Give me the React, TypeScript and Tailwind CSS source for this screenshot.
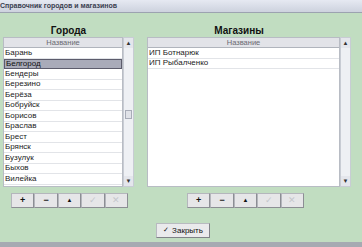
import React from "react";

const cities = [
  "Барань",
  "Белгород",
  "Бендеры",
  "Березино",
  "Берёза",
  "Бобруйск",
  "Борисов",
  "Браслав",
  "Брест",
  "Брянск",
  "Бузулук",
  "Быхов",
  "Вилейка",
];

const shops = ["ИП Ботнарюк", "ИП Рыбалченко"];

function ScrollBar({ thumb }: { thumb?: boolean }) {
  return (
    <div className="w-[11px] flex flex-col bg-[#eef0f4] border border-[#c8ccd4]">
      <div className="h-[10px] flex items-center justify-center bg-[#e4e6ec] text-[6px] text-[#333]">▲</div>
      <div className="flex-1 relative">
        {thumb && (
          <div className="absolute left-[1px] right-[1px] top-[62px] h-[9px] bg-[#e0e2e8] border border-[#a8acb8]" />
        )}
      </div>
      <div className="h-[10px] flex items-center justify-center bg-[#e4e6ec] text-[6px] text-[#333]">▼</div>
    </div>
  );
}

function Grid({ rows, selected, thumb }: { rows: string[]; selected?: number; thumb?: boolean }) {
  return (
    <div className="flex h-[150px]">
      <div className="flex-1 flex flex-col bg-white border border-[#b8bcc4]">
        <div className="h-[10px] flex items-center justify-center bg-[#e2e3e8] border-b border-[#b0b4bc] text-[#6a6a72] text-[7.5px]">
          Название
        </div>
        {rows.map((r, i) => (
          <div
            key={r}
            className={
              i === selected
                ? "h-[10.5px] flex items-center pl-[1px] bg-[#a9abb9] border border-[#5c5c6c] text-[#111] text-[8px]"
                : "h-[10.5px] flex items-center pl-[1px] border-b border-[#e2e4e8] text-[#222] text-[8px]"
            }
          >
            {r}
          </div>
        ))}
      </div>
      <ScrollBar thumb={thumb} />
    </div>
  );
}

function Buttons() {
  const items = [
    { t: "+", on: true },
    { t: "−", on: true },
    { t: "▲", on: true },
    { t: "✓", on: false },
    { t: "✕", on: false },
  ];
  return (
    <div className="flex">
      {items.map((b, i) => (
        <div
          key={i}
          className={
            "w-[23.4px] h-[15px] flex items-center justify-center bg-[#e6e6e8] border border-[#b4b6bc] border-r-[#8c8e94] border-b-[#8c8e94] " +
            (b.on ? "text-[#111] font-bold" : "text-[#c4c6cc]")
          }
        >
          <span className={b.t === "▲" ? "text-[6px]" : "text-[9px]"}>{b.t}</span>
        </div>
      ))}
    </div>
  );
}

export default function App() {
  return (
    <div className="w-[362px] h-[247px] flex flex-col bg-[#c1ddc1] overflow-hidden" style={{ fontFamily: '"Liberation Sans", Arial, sans-serif' }}>
      {/* title bar */}
      <div className="h-[13px] flex items-center bg-gradient-to-b from-[#e6e9f2] to-[#cdd2de] border-b border-[#9ca2b0] text-[7px] font-bold text-[#3a4050] whitespace-nowrap">
        Справочник городов и магазинов
      </div>

      <div className="flex-1 flex flex-col">
        <div className="flex pt-[10px] pl-[3px]">
          {/* cities */}
          <div className="w-[131px] flex flex-col">
            <div className="h-[14px] flex items-center justify-center text-[10px] font-bold text-[#111]">Города</div>
            <Grid rows={cities} selected={1} thumb />
            <div className="pl-[8px] pt-[6px]">
              <Buttons />
            </div>
          </div>

          {/* shops */}
          <div className="w-[204px] ml-[13px] flex flex-col">
            <div className="h-[14px] flex items-center justify-center pr-[20px] text-[10px] font-bold text-[#111]">Магазины</div>
            <Grid rows={shops} />
            <div className="pl-[40px] pt-[6px]">
              <Buttons />
            </div>
          </div>
        </div>

        <div className="flex justify-center pt-[15px] pl-[4px]">
          <div className="w-[54px] h-[15px] flex items-center justify-center gap-[3px] bg-[#eaeaec] border border-[#b8bac0] border-r-[#808288] border-b-[#808288] text-[8px] text-[#111]">
            <span className="text-[7px]">✓</span>
            <span>Закрыть</span>
          </div>
        </div>
      </div>

      <div className="h-[5px] bg-[#a6aab2]" />
    </div>
  );
}
